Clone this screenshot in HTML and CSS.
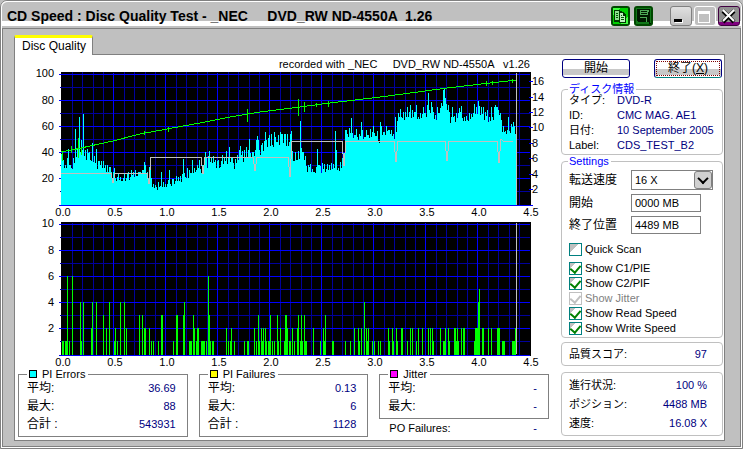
FILE: index.html
```html
<!DOCTYPE html>
<html lang="ja">
<head>
<meta charset="utf-8">
<title>CD Speed : Disc Quality Test</title>
<link rel="stylesheet" href="styles.css">
</head>
<body>
<div class="window">
  <header class="titlebar">
    <h1 class="title">CD Speed : Disc Quality Test - _NEC &nbsp; &nbsp; DVD_RW ND-4550A &nbsp;1.26</h1>
    <div class="tools">
      <button class="tool tool-copy" aria-label="Copy"><svg viewBox="0 0 19 20" width="19" height="20" shape-rendering="crispEdges"><path fill="#00d000" d="M2 2h15v16H2z"/><path fill="#40ff40" d="M2 2h7L2 9zM17 10v8H9z"/><path fill="#003800" d="M3 4h6v1h2v11H3z"/><path fill="#90e090" d="M4 5h4v9H4z"/><path fill="#003800" d="M8 6h5v1h1v1h1v9H8z"/><path fill="#c0f0c0" d="M9 7h3v3h2v6H9z"/><path fill="#006000" d="M5 7h2v1H5zM5 9h2v1H5zM5 11h2v1H5zM10 9h1v1h-1zM10 11h3v1h-3zM10 13h3v1h-3z"/></svg></button>
      <button class="tool tool-save" aria-label="Save"><svg viewBox="0 0 19 20" width="19" height="20" shape-rendering="crispEdges"><path fill="#107818" d="M2 2h15v16H2z"/><path fill="#001800" d="M3 3h13v13l1 2h-2v-2H4l-1-1z"/><path fill="#50a858" d="M6 4h8v5H6z"/><path fill="#001800" d="M7 5h6v1H7zM7 7h6v1H7z"/><path fill="#50a858" d="M6 11h7v5h-1v-4H6zM14 4h1v2h-1z"/></svg></button>
    </div>
    <div class="controls">
      <button class="ctl" aria-label="Minimize"><svg viewBox="0 0 19 18" width="19" height="18" shape-rendering="crispEdges"><path fill="#fff" d="M4 13h8v3H4z"/><path d="M3 12h8v3H3z"/></svg></button>
      <button class="ctl ctl-flat" aria-label="Maximize" disabled><svg viewBox="0 0 19 18" width="19" height="18" shape-rendering="crispEdges"><path fill="#fff" fill-rule="evenodd" d="M3 4h12v12H3zm1 3v8h10V7z"/></svg></button>
      <button class="ctl ctl-close" aria-label="Close"><svg viewBox="0 0 19 18" width="19" height="18"><path d="M4 4l11 11M15 4L4 15" stroke="#000" stroke-width="4"/><path d="M4 3l11 11M15 3L4 14" stroke="#fff" stroke-width="2"/></svg></button>
    </div>
  </header>
  <div class="frame">
    <nav class="tabs"><button class="tab" role="tab" aria-selected="true">Disc Quality</button></nav>
    <main class="page">
      <section class="left">
        <svg class="charts" viewBox="18 55 531 313" role="img" aria-label="PI Errors / PI Failures">
          <text x="530" y="68" text-anchor="end" xml:space="preserve">recorded with _NEC     DVD_RW ND-4550A   v1.26</text>
          <g shape-rendering="crispEdges">
            <path d="M61 72H531V206H61zM61 222H531V356H61z"/>
            <g fill="none" stroke="#00009c">
              <path d="M72 72V205M82 72V205M93 72V205M103 72V205M124 72V205M134 72V205M145 72V205M155 72V205M176 72V205M186 72V205M197 72V205M207 72V205M228 72V205M238 72V205M249 72V205M259 72V205M280 72V205M290 72V205M301 72V205M311 72V205M332 72V205M342 72V205M353 72V205M363 72V205M384 72V205M394 72V205M405 72V205M415 72V205M436 72V205M446 72V205M457 72V205M467 72V205M488 72V205M498 72V205M509 72V205M519 72V205"/>
              <path d="M72 223V355M82 223V355M93 223V355M103 223V355M124 223V355M134 223V355M145 223V355M155 223V355M176 223V355M186 223V355M197 223V355M207 223V355M228 223V355M238 223V355M249 223V355M259 223V355M280 223V355M290 223V355M301 223V355M311 223V355M332 223V355M342 223V355M353 223V355M363 223V355M384 223V355M394 223V355M405 223V355M415 223V355M436 223V355M446 223V355M457 223V355M467 223V355M488 223V355M498 223V355M509 223V355M519 223V355"/>
              <path d="M60 87H530M60 113H530M60 139H530M60 165H530M60 191H530M60 237H530M60 263H530M60 289H530M60 315H530M60 341H530"/>
            </g>
            <path fill="none" stroke="#0000ff" d="M113 73V205M165 73V205M217 73V205M269 73V205M321 73V205M373 73V205M425 73V205M477 73V205M113 223V355M165 223V355M217 223V355M269 223V355M321 223V355M373 223V355M425 223V355M477 223V355M59 74H530M59 100H530M59 126H530M59 152H530M59 178H530M59 205H533M59 224H530M59 250H530M59 276H530M59 302H530M59 328H530M59 355H530M529 81h4M529 97h4M529 112h4M529 127h4M529 143h4M529 158h4M529 174h4M529 189h4"/>
            <path fill="#00ffff" d="M61 205V154H63V160H64V168H65V165H66V168H67V158H68V149H69V165H71V168H72V169H73V158H74V163H75V129H76V157H77V148H78V147H79V117H80V152H81V140H82V150H83V114H84V156H85V150H86V160H87V149H88V153H89V152H90V160H91V161H92V143H93V162H94V156H95V163H96V149H97V169H98V161H100V165H101V161H102V168H103V161H104V168H105V165H106V172H107V165H108V172H109V167H111V172H112V180H113V172H114V168H115V178H116V181H117V177H118V174H119V180H120V177H121V181H123V178H124V174H125V181H126V178H127V174H128V172H129V180H130V177H131V170H132V175H133V172H134V177H135V170H136V176H138V172H141V174H142V170H144V162H145V165H146V174H147V172H148V178H149V167H150V165H151V178H152V187H153V184H154V188H155V185H156V187H157V190H158V182H159V187H160V186H161V172H162V187H163V182H164V187H165V184H166V187H167V184H168V180H169V170H170V184H171V186H172V179H174V184H175V181H176V176H177V181H178V177H179V181H180V176H181V182H182V174H183V159H184V173H185V177H186V178H187V168H188V178H189V170H190V173H192V160H193V173H194V168H195V172H196V170H197V165H198V168H199V160H200V169H201V173H202V165H203V169H204V160H205V152H206V158H207V168H208V156H209V151H210V162H211V158H212V163H213V156H214V162H215V160H216V168H217V161H218V160H219V168H220V167H221V161H222V155H223V164H224V158H225V161H226V151H227V164H228V158H229V147H230V162H231V158H233V163H234V169H235V159H236V163H237V155H238V160H239V150H240V146H241V155H242V151H243V162H244V150H245V157H246V147H247V158H248V150H249V139H250V153H251V158H252V152H254V156H255V150H256V140H257V136H258V140H259V150H260V155H261V145H262V143H263V151H264V141H265V132H266V140H267V147H268V138H269V135H270V146H271V134H272V145H273V147H274V132H275V137H276V142H278V135H279V145H280V132H281V134H283V143H284V134H286V146H287V134H288V146H289V142H290V134H291V131H292V151H293V161H295V152H296V160H298V151H299V159H300V121H301V148H302V152H304V160H305V156H306V166H307V172H308V165H309V167H310V164H311V172H312V169H313V172H315V173H316V167H317V149H318V165H320V166H321V173H322V163H323V169H324V164H325V172H326V169H327V164H328V170H329V165H330V170H331V163H332V169H333V164H334V168H335V131H336V150H337V170H338V168H339V171H340V162H341V168H342V158H343V153H344V165H345V130H347V134H348V137H349V128H350V133H351V118H352V133H353V138H354V135H356V129H357V137H358V140H359V134H360V136H361V122H362V130H363V139H364V137H366V130H367V135H369V138H370V129H371V137H372V132H373V126H374V133H375V136H377V131H378V142H379V143H380V122H381V126H382V135H383V132H385V135H386V126H387V131H388V130H390V134H391V130H392V136H393V134H394V139H395V117H396V132H397V121H398V113H399V117H400V109H401V117H402V118H403V112H404V120H405V112H406V117H407V107H408V117H409V112H410V105H411V118H412V110H413V117H414V112H416V105H417V119H418V117H419V119H420V113H421V118H422V114H423V107H424V113H426V117H427V105H428V93H429V110H430V113H431V102H432V107H433V112H434V119H435V115H436V120H437V107H438V113H440V108H441V103H442V106H443V90H444V89H445V98H446V104H447V110H448V105H449V112H450V123H451V117H452V107H453V117H454V116H455V122H456V113H457V118H458V113H459V108H460V112H461V106H462V118H463V121H464V117H465V121H466V116H467V120H468V121H469V113H470V119H471V114H472V117H473V113H474V104H475V114H476V107H477V114H478V101H479V106H480V115H481V107H482V114H483V107H484V120H485V112H486V116H487V110H488V122H489V117H490V121H491V107H492V117H493V120H494V107H495V105H496V107H498V110H499V115H500V113H501V120H502V132H503V126H504V132H505V131H506V134H507V130H508V117H509V131H510V133H511V124H512V127H513V122H514V126H515V134H516V205z"/>
            <path class="read" d="M61 152L72 150L90 146L113 141L140 134L167 129L200 123L230 117L260 112L300 107L330 103L380 97L403 94L447 88L490 83L517 80M62 151v10M71 146v7M78 138v20M81 147v8M168 127v5M144 131v4M247 109v13M298 99v17M304 102v10M328 101v6M316 103v4M486 81v5M492 81v4M512 79v4"/>
            <path class="write" d="M61 173H111L113 183L115 173H147L149 184L151 157H201L203 174L205 157H253L255 171L257 157H288L290 177L292 141H342L344 166L346 141H394L396 162L398 141H445L447 161L449 141H497L499 163L501 139L503 141H513"/>
            <path fill="#00ff00" d="M62 355v-14h2v14M65 355v-14h3v14M67 355V276h1v79M69 355v-14h1v14M72 355V276h1v79M80 355v-53h1v53M81 355v-14h1v14M83 355v-53h1v53M91 355v-27h1v27M92 355v-53h1v53M96 355v-53h1v53M103 355v-40h1v40M106 355v-27h1v27M109 355v-53h1v53M114 355v-14h1v14M115 355v-27h1v27M117 355v-14h1v14M120 355v-53h1v53M124 355v-53h1v53M126 355v-27h1v27M139 355v-40h1v40M142 355v-40h1v40M144 355v-27h2v27M149 355v-27h1v27M151 355v-14h1v14M153 355v-14h1v14M158 355v-14h1v14M161 355v-40h2v40M173 355v-14h1v14M176 355v-40h2v40M183 355v-40h1v40M184 355v-53h1v53M189 355v-14h3v14M193 355v-40h1v40M194 355v-27h1v27M196 355v-14h1v14M197 355v-27h2v27M201 355v-14h4v14M206 355v-14h1v14M208 355V276h1v79M209 355v-40h1v40M210 355v-14h1v14M212 355v-14h2v14M226 355v-27h1v27M228 355v-14h1v14M230 355v-14h1v14M231 355v-27h1v27M234 355v-14h1v14M244 355v-14h1v14M247 355v-14h2v14M254 355v-27h1v27M256 355v-14h1v14M258 355v-40h1v40M259 355v-14h1v14M261 355v-27h1v27M262 355v-14h1v14M263 355v-27h1v27M265 355v-27h1v27M266 355v-14h1v14M268 355v-14h2v14M270 355v-40h1v40M272 355v-14h1v14M274 355v-14h1v14M277 355v-40h1v40M278 355v-14h1v14M280 355v-27h1v27M284 355v-14h1v14M285 355v-40h2v40M287 355v-27h1v27M289 355v-14h2v14M292 355v-27h1v27M294 355v-14h1v14M297 355v-27h1v27M298 355v-40h1v40M300 355v-14h1v14M301 355v-40h1v40M302 355v-14h1v14M304 355v-40h1v40M305 355v-14h2v14M313 355v-27h1v27M320 355v-14h1v14M323 355v-27h1v27M324 355v-14h1v14M325 355v-40h1v40M332 355v-14h2v14M345 355v-14h1v14M350 355v-14h1v14M354 355v-27h1v27M358 355v-27h1v27M359 355v-14h1v14M361 355v-27h1v27M364 355v-53h1v53M366 355v-27h1v27M367 355v-14h1v14M368 355v-27h1v27M372 355v-14h1v14M374 355v-14h1v14M378 355v-14h1v14M380 355v-14h1v14M388 355v-27h1v27M389 355v-14h1v14M392 355v-27h1v27M393 355v-14h1v14M396 355v-27h1v27M397 355v-14h1v14M401 355v-27h2v27M407 355v-14h1v14M410 355v-27h1v27M412 355v-27h1v27M416 355v-14h1v14M418 355v-27h1v27M422 355v-27h1v27M428 355v-27h1v27M430 355v-27h1v27M432 355v-27h1v27M433 355v-14h1v14M440 355v-27h1v27M443 355v-14h2v14M445 355v-27h1v27M448 355v-27h1v27M449 355v-14h1v14M454 355v-27h2v27M456 355v-14h3v14M457 355v-27h1v27M461 355v-27h1v27M463 355v-27h2v27M474 355v-14h1v14M475 355v-27h3v27M478 355v-53h1v53M479 355v-66h1v66M482 355v-27h2v27M488 355v-27h1v27M491 355v-27h1v27M497 355v-27h3v27M502 355v-14h3v14M512 355v-14h3v14M515 355v-27h1v27"/>
            <path fill="#c0c0c0" d="M516 73h1v132h-1zM516 223h1v131h-1z"/>
          </g>
          <g text-anchor="end">
            <text x="54" y="77">100</text><text x="54" y="104">80</text><text x="54" y="130">60</text><text x="54" y="156">40</text><text x="54" y="182">20</text>
            <text x="54" y="227">10</text><text x="54" y="254">8</text><text x="54" y="280">6</text><text x="54" y="306">4</text><text x="54" y="332">2</text>
          </g>
          <g>
            <text x="532" y="85">16</text><text x="532" y="101">14</text><text x="532" y="116">12</text><text x="532" y="131">10</text><text x="532" y="147">8</text><text x="532" y="162">6</text><text x="532" y="178">4</text><text x="532" y="193">2</text>
          </g>
          <g text-anchor="middle">
            <text x="63" y="216">0.0</text><text x="115" y="216">0.5</text><text x="167" y="216">1.0</text><text x="219" y="216">1.5</text><text x="271" y="216">2.0</text><text x="323" y="216">2.5</text><text x="375" y="216">3.0</text><text x="427" y="216">3.5</text><text x="479" y="216">4.0</text><text x="531" y="216">4.5</text>
            <text x="63" y="366">0.0</text><text x="115" y="366">0.5</text><text x="167" y="366">1.0</text><text x="219" y="366">1.5</text><text x="271" y="366">2.0</text><text x="323" y="366">2.5</text><text x="375" y="366">3.0</text><text x="427" y="366">3.5</text><text x="479" y="366">4.0</text><text x="531" y="366">4.5</text>
          </g>
        </svg>
        <div class="stats">
          <fieldset class="stat">
            <legend><span class="swatch swatch-pie"></span>PI Errors</legend>
            <dl><div><dt>平均:</dt><dd>36.69</dd></div><div><dt>最大:</dt><dd>88</dd></div><div><dt>合計 :</dt><dd>543931</dd></div></dl>
          </fieldset>
          <fieldset class="stat">
            <legend><span class="swatch swatch-pif"></span>PI Failures</legend>
            <dl><div><dt>平均:</dt><dd>0.13</dd></div><div><dt>最大:</dt><dd>6</dd></div><div><dt>合計 :</dt><dd>1128</dd></div></dl>
          </fieldset>
          <div>
            <fieldset class="stat">
              <legend><span class="swatch swatch-jitter"></span>Jitter</legend>
              <dl><div><dt>平均:</dt><dd>-</dd></div><div><dt>最大:</dt><dd>-</dd></div></dl>
            </fieldset>
            <dl class="po"><div><dt>PO Failures:</dt><dd>-</dd></div></dl>
          </div>
        </div>
      </section>
      <aside class="side">
        <div class="actions">
          <button class="btn">開始</button>
          <button class="btn btn-focus">終了(<u>X</u>)</button>
        </div>
        <fieldset class="group">
          <legend>ディスク情報</legend>
          <dl class="info"><dt>タイプ:</dt><dd>DVD-R</dd><dt>ID:</dt><dd>CMC MAG. AE1</dd><dt>日付:</dt><dd>10 September 2005</dd><dt>Label:</dt><dd>CDS_TEST_B2</dd></dl>
        </fieldset>
        <fieldset class="group">
          <legend>Settings</legend>
          <div class="fields">
            <label for="speed">転送速度</label>
            <span class="combo"><select id="speed"><option>16 X</option></select></span>
            <label for="start">開始</label><input id="start" type="text" value="0000 MB">
            <label for="end">終了位置</label><input id="end" type="text" value="4489 MB">
          </div>
          <div class="checks">
            <label class="check check-first"><input type="checkbox">Quick Scan</label>
            <label class="check"><input type="checkbox" checked>Show C1/PIE</label>
            <label class="check"><input type="checkbox" checked>Show C2/PIF</label>
            <label class="check"><input type="checkbox" checked disabled>Show Jitter</label>
            <label class="check"><input type="checkbox" checked>Show Read Speed</label>
            <label class="check"><input type="checkbox" checked>Show Write Speed</label>
          </div>
        </fieldset>
        <dl class="box score"><div><dt>品質スコア:</dt><dd>97</dd></div></dl>
        <dl class="box progress"><div><dt>進行状況:</dt><dd>100 %</dd></div><div><dt>ポジション:</dt><dd>4488 MB</dd></div><div><dt>速度:</dt><dd>16.08 X</dd></div></dl>
      </aside>
    </main>
  </div>
</div>
</body>
</html>
```
FILE: styles.css
```css
* { box-sizing: border-box; }

body {
  margin: 0;
  background: #c0c0c0;
  color: #000;
  font: 11px/15px "Liberation Sans", "Noto Sans CJK JP", sans-serif;
}

button, input, select { font: inherit; color: inherit; margin: 0; padding: 0; }
dl, dd { margin: 0; }
fieldset { margin: 0; min-width: 0; }
dd { color: #000080; }
svg { display: block; }

.window {
  min-height: 100vh;
  display: flex;
  flex-direction: column;
  padding: 1px;
  padding-top: 0;
  border: 1px solid #808080;
  border-radius: 7px 7px 0 0;
  background: #fff;
}

/* Title bar */
.titlebar {
  display: flex;
  align-items: flex-start;
  height: 27px;
  padding: 4px 1px 0 5px;
  border-top: 1px solid #fff;
  border-radius: 6px 6px 0 0;
  background: linear-gradient(#c0c0c0 19px, #fff 19px, #fff 24px, #c0c0c0 24px);
}
.title {
  flex: 1;
  margin: 0;
  font-size: 14px;
  line-height: 20px;
  white-space: nowrap;
}
.tools { display: flex; gap: 4px; margin-right: 17px; }
.tool {
  width: 19px;
  height: 20px;
  border: 0;
  border-radius: 3px;
  overflow: hidden;
  background: #004800;
}
.controls { display: flex; gap: 2px; }
.ctl {
  width: 22px;
  height: 20px;
  border: 1px solid #808080;
  border-radius: 3px;
  background: linear-gradient(#e0e0e0, #c0c0c0);
}
.ctl-flat { border-color: #fff; background: #c0c0c0; }
.ctl-close { border-color: #400040; background: linear-gradient(#909090 15px, #800080 15px); }

/* Client area */
.frame {
  flex: 1;
  padding: 6px 15px 5px 11px;
  border: 1px solid #808080;
  background: #c0c0c0;
}
.tab {
  display: block;
  height: 20px;
  padding: 0 6px 0 7px;
  border: solid #808080;
  border-width: 0 1px;
  border-top: 3px solid #ff0;
  border-radius: 2px 2px 0 0;
  background: #fff;
  position: relative;
  margin-bottom: -1px;
  font-size: 12px;
}
.page {
  display: grid;
  grid-template-columns: 1fr 162px;
  column-gap: 12px;
  padding: 0 1px 3px 3px;
  border: 1px solid #808080;
  background: #fff;
}

/* Charts */
.charts { width: 100%; height: auto; }
.charts text { font-size: 11px; white-space: pre; }
.read { fill: none; stroke: #00ff00; stroke-width: 1; }
.write { fill: none; stroke: #c0c0c0; stroke-width: 1; }

/* Statistics */
.stats { display: grid; grid-template-columns: repeat(3, 1fr); gap: 11px; }
.stat { padding: 0 11px 3px 8px; border: 1px solid #808080; }
.stat legend {
  display: flex;
  align-items: center;
  gap: 5px;
  height: 12px;
  margin-bottom: -1px;
  padding-right: 3px;
  line-height: 12px;
}
.stats dl > div, .box > div { display: flex; justify-content: space-between; }
.stats dl > div { line-height: 18px; }
.stat dt, .fields label, .btn { font-size: 12px; }
.po { padding: 0 12px 0 10px; }
.swatch { width: 8px; height: 8px; border: 1px solid #000; }
.swatch-pie { background: #0ff; }
.swatch-pif { background: #ff0; }
.swatch-jitter { background: #f0f; }

/* Side column */
.side { padding-top: 4px; }
.actions { display: flex; justify-content: space-between; margin-bottom: 5px; padding: 0 1px; }
.btn {
  width: 68px;
  height: 19px;
  border: 1px solid #000080;
  border-radius: 3px;
  background: linear-gradient(#fff 9px, #c8c8c8 9px, #c8c8c8 15px, #fff 15px);
  line-height: 17px;
}
.btn-focus { outline: 1px dotted #800000; outline-offset: -3px; border-bottom-color: #008080; }
.group, .box { border: 1px solid #c0c0c0; border-radius: 4px; }
.group { padding: 0 0 1px 7px; }
.group legend {
  height: 12px;
  margin-bottom: -2px;
  margin-left: -1px;
  padding: 0 2px 0 1px;
  line-height: 12px;
  color: #00f;
}
.info { display: grid; grid-template-columns: 48px 1fr; line-height: 15px; white-space: nowrap; }
.fields {
  display: grid;
  grid-template-columns: 62px 1fr;
  row-gap: 4px;
  align-items: center;
  padding-top: 5px;
}
.fields input {
  width: 70px;
  height: 18px;
  padding: 0 3px;
  border: 1px solid #808080;
  background: #fff;
}
.combo { position: relative; width: 82px; }
.combo select {
  display: block;
  appearance: none;
  width: 100%;
  height: 20px;
  padding: 0 3px;
  border: 1px solid #808080;
  border-radius: 0;
  background: #fff;
}
.combo::before {
  content: "";
  position: absolute;
  inset: 1px 1px 1px auto;
  width: 16px;
  border: 1px solid #808080;
  border-radius: 3px;
  background: #d0d0d0;
  pointer-events: none;
}
.combo::after {
  content: "";
  position: absolute;
  top: 6px;
  right: 6px;
  width: 6px;
  height: 6px;
  border: solid #000;
  border-width: 0 2px 2px 0;
  transform: rotate(45deg) translate(-1px, -1px);
  pointer-events: none;
}
.checks { padding-top: 8px; }
.check { display: flex; align-items: center; gap: 3px; height: 15px; }
.check-first { margin-bottom: 4px; }
.check input {
  appearance: none;
  display: grid;
  place-items: start center;
  width: 13px;
  height: 13px;
  border: 1px solid #008080;
  background: linear-gradient(135deg, #c0c0c0 38%, #fff 38%);
}
.check input:checked { background: linear-gradient(135deg, #c0c0c0 25%, #fff 25%); }
.check input:checked::after {
  content: "";
  width: 5px;
  height: 8px;
  border: solid #008000;
  border-width: 0 2px 2px 0;
  transform: rotate(40deg);
}
.check input:checked:disabled { border-color: #c0c0c0; background: #fff; }
.check input:disabled::after { border-color: #c0c0c0; }
.check:has(input:disabled) { color: #808080; }
.box { padding: 0 15px 0 7px; }
.score { margin: 4px 0 6px; line-height: 22px; }
.progress { padding-top: 3px; padding-bottom: 2px; line-height: 19px; }
```
